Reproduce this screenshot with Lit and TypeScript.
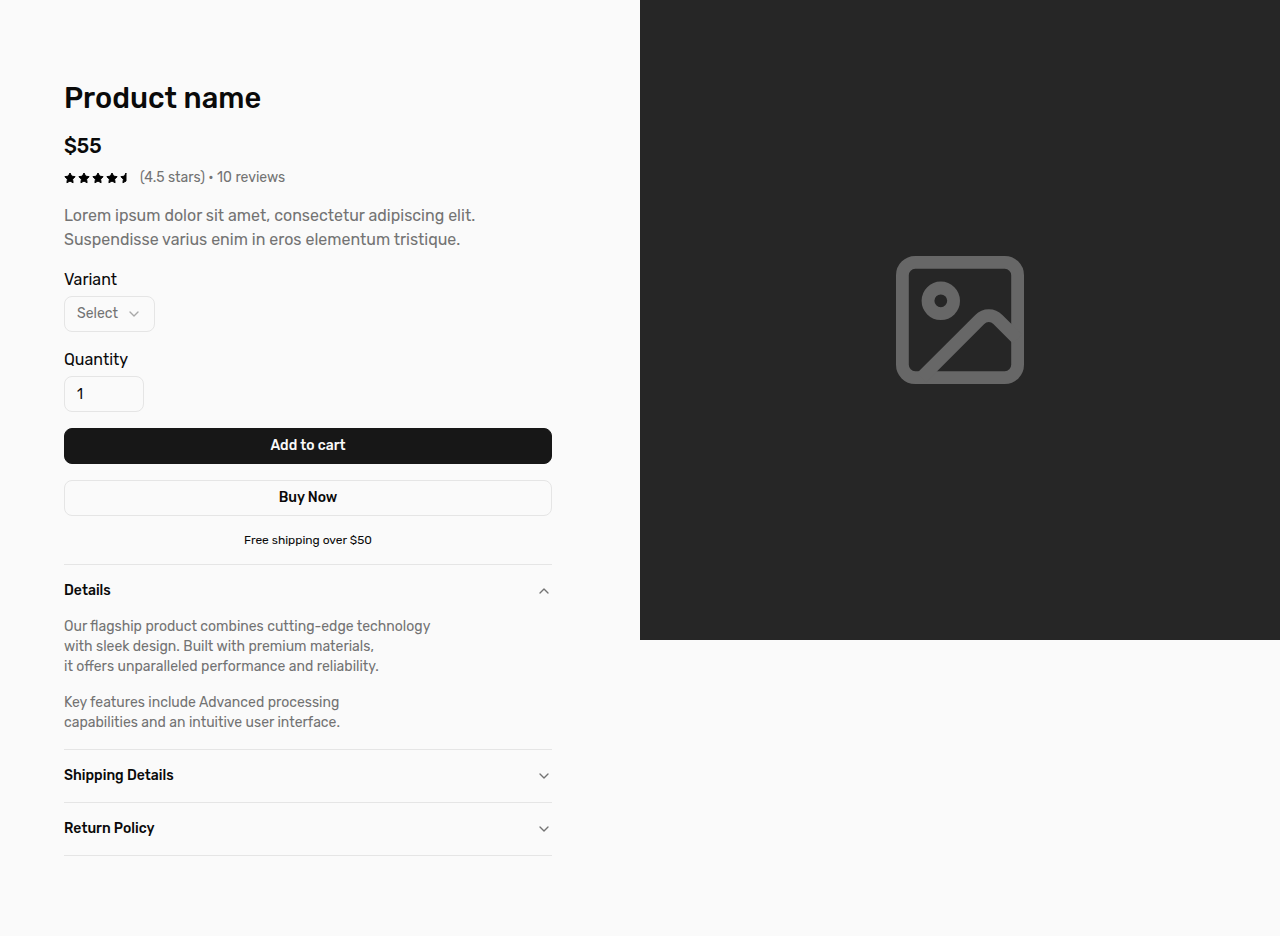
import { LitElement, html, css, svg } from "lit";
import { customElement, state, property } from "lit/decorators.js";

const STAR = "M6 1 7.6 4.1 11.1 4.7 8.6 7.2 9.1 10.7 6 9.1 2.9 10.7 3.4 7.2 0.9 4.7 4.4 4.1Z";
const HALF_STAR = "M6 1 6 9.1 2.9 10.7 3.4 7.2 0.9 4.7 4.4 4.1Z";

const chevronDown = svg`<path d="m6 9 6 6 6-6"></path>`;
const chevronUp = svg`<path d="m18 15-6-6-6 6"></path>`;

interface Section {
  title: string;
  paragraphs: string[][];
}

const SECTIONS: Section[] = [
  {
    title: "Details",
    paragraphs: [
      [
        "Our flagship product combines cutting-edge technology",
        "with sleek design. Built with premium materials,",
        "it offers unparalleled performance and reliability.",
      ],
      [
        "Key features include Advanced processing",
        "capabilities and an intuitive user interface.",
      ],
    ],
  },
  { title: "Shipping Details", paragraphs: [] },
  { title: "Return Policy", paragraphs: [] },
];

@customElement("star-rating")
export class StarRating extends LitElement {
  @property({ type: Number }) value = 0;

  static styles = css`
    :host {
      display: flex;
      gap: 2px;
    }
    .star {
      display: block;
      width: 12px;
      height: 12px;
      fill: #000;
      stroke: #000;
      stroke-width: 1;
      stroke-linejoin: round;
    }
  `;

  render() {
    return Array.from({ length: Math.ceil(this.value) }, (_, i) => {
      const d = this.value - i >= 1 ? STAR : HALF_STAR;
      return html`<svg class="star" viewBox="0 0 12 12" aria-hidden="true">
        <path d=${d}></path>
      </svg>`;
    });
  }
}

@customElement("app-root")
export class AppRoot extends LitElement {
  @state() private open = 0;

  static styles = css`
    :host {
      display: block;
      min-height: 100vh;
      background: #fafafa;
      color: #0a0a0a;
      font-family: Rubik, Inter, sans-serif;
      font-size: 16px;
      line-height: 24px;
    }
    *,
    *::before,
    *::after {
      box-sizing: border-box;
    }
    h1,
    h2,
    p {
      margin: 0;
    }
    button,
    input,
    select {
      font: inherit;
      color: inherit;
      margin: 0;
    }
    .page {
      display: grid;
      grid-template-columns: 1fr 1fr;
      align-items: start;
    }
    .info {
      display: flex;
      flex-direction: column;
      gap: 16px;
      padding: 80px 88px 80px 64px;
    }
    .title {
      font-size: 29px;
      line-height: 36px;
      font-weight: 500;
    }
    .summary {
      display: flex;
      flex-direction: column;
      gap: 8px;
    }
    .price {
      font-size: 20px;
      line-height: 28px;
      font-weight: 500;
    }
    .rating {
      display: flex;
      align-items: center;
      gap: 8px;
      font-size: 14px;
      line-height: 20px;
      color: #737373;
    }
    .description {
      max-width: 448px;
      color: #737373;
    }
    .form {
      display: flex;
      flex-direction: column;
      gap: 16px;
    }
    .field {
      display: flex;
      flex-direction: column;
      align-items: flex-start;
      gap: 4px;
    }
    .select-box {
      display: grid;
      align-items: center;
      color: #737373;
    }
    .select,
    .select-icon {
      grid-area: 1 / 1;
    }
    .select,
    .quantity {
      height: 36px;
      padding: 0 12px;
      border: 1px solid #e5e5e5;
      border-radius: 8px;
      background: transparent;
      font-size: 14px;
      line-height: 20px;
    }
    .select {
      appearance: none;
      width: 91px;
    }
    .select-icon {
      justify-self: end;
      margin-right: 13px;
      opacity: 0.6;
      pointer-events: none;
    }
    .quantity {
      appearance: textfield;
      width: 80px;
    }
    .quantity::-webkit-inner-spin-button {
      appearance: none;
    }
    .icon {
      display: block;
      width: 16px;
      height: 16px;
      fill: none;
      stroke: #737373;
      stroke-width: 2;
      stroke-linecap: round;
      stroke-linejoin: round;
    }
    .button {
      height: 36px;
      padding: 0 16px;
      border: 1px solid #e5e5e5;
      border-radius: 8px;
      background: #fafafa;
      font-size: 14px;
      line-height: 20px;
      font-weight: 500;
      cursor: pointer;
    }
    .button.primary {
      border-color: #171717;
      background: #171717;
      color: #fafafa;
    }
    .note {
      font-size: 12px;
      line-height: 16px;
      text-align: center;
    }
    .accordion {
      border-top: 1px solid #e5e5e5;
      font-size: 14px;
      line-height: 20px;
    }
    .item {
      border-bottom: 1px solid #e5e5e5;
    }
    .item-title {
      font-size: 14px;
      font-weight: 500;
    }
    .trigger {
      display: flex;
      align-items: center;
      justify-content: space-between;
      width: 100%;
      padding: 16px 0;
      border: 0;
      background: none;
      cursor: pointer;
    }
    .content {
      display: flex;
      flex-direction: column;
      gap: 16px;
      padding-bottom: 16px;
      color: #737373;
    }
    .media {
      display: grid;
      place-items: center;
      aspect-ratio: 1;
      background: #262626;
    }
    .placeholder {
      width: 20%;
      fill: none;
      stroke: #676767;
      stroke-width: 2;
      stroke-linejoin: round;
    }
  `;

  private toggle(index: number) {
    this.open = this.open === index ? -1 : index;
  }

  private renderSection(section: Section, index: number) {
    const open = this.open === index;
    return html`<div class="item">
      <h2 class="item-title">
        <button class="trigger" type="button" aria-expanded=${open} @click=${() => this.toggle(index)}>
          <span>${section.title}</span>
          <svg class="icon" viewBox="0 0 24 24" aria-hidden="true">${open ? chevronUp : chevronDown}</svg>
        </button>
      </h2>
      ${open
        ? html`<div class="content">
            ${section.paragraphs.map(
              (lines) => html`<p>${lines.map((line, i) => (i ? html`<br />${line}` : line))}</p>`
            )}
          </div>`
        : null}
    </div>`;
  }

  render() {
    return html`<main class="page">
      <section class="info">
        <h1 class="title">Product name</h1>
        <div class="summary">
          <p class="price">$55</p>
          <div class="rating">
            <star-rating .value=${4.5}></star-rating>
            <span>(4.5 stars) • 10 reviews</span>
          </div>
        </div>
        <p class="description">
          Lorem ipsum dolor sit amet, consectetur adipiscing elit.<br />Suspendisse varius enim in eros
          elementum tristique.
        </p>
        <form class="form" @submit=${(e: Event) => e.preventDefault()}>
          <div class="field">
            <label for="variant">Variant</label>
            <div class="select-box">
              <select class="select" id="variant">
                <option>Select</option>
              </select>
              <svg class="icon select-icon" viewBox="0 0 24 24" aria-hidden="true">${chevronDown}</svg>
            </div>
          </div>
          <div class="field">
            <label for="quantity">Quantity</label>
            <input class="quantity" id="quantity" type="number" min="1" value="1" />
          </div>
          <button class="button primary" type="submit">Add to cart</button>
          <button class="button" type="button">Buy Now</button>
          <p class="note">Free shipping over $50</p>
        </form>
        <div class="accordion">${SECTIONS.map((section, i) => this.renderSection(section, i))}</div>
      </section>
      <div class="media">
        <svg class="placeholder" viewBox="2 2 20 20" aria-hidden="true">
          <rect x="3" y="3" width="18" height="18" rx="2"></rect>
          <circle cx="9" cy="9" r="2"></circle>
          <path d="m21 15-3.086-3.086a2 2 0 0 0-2.828 0L6 21"></path>
        </svg>
      </div>
    </main>`;
  }
}
